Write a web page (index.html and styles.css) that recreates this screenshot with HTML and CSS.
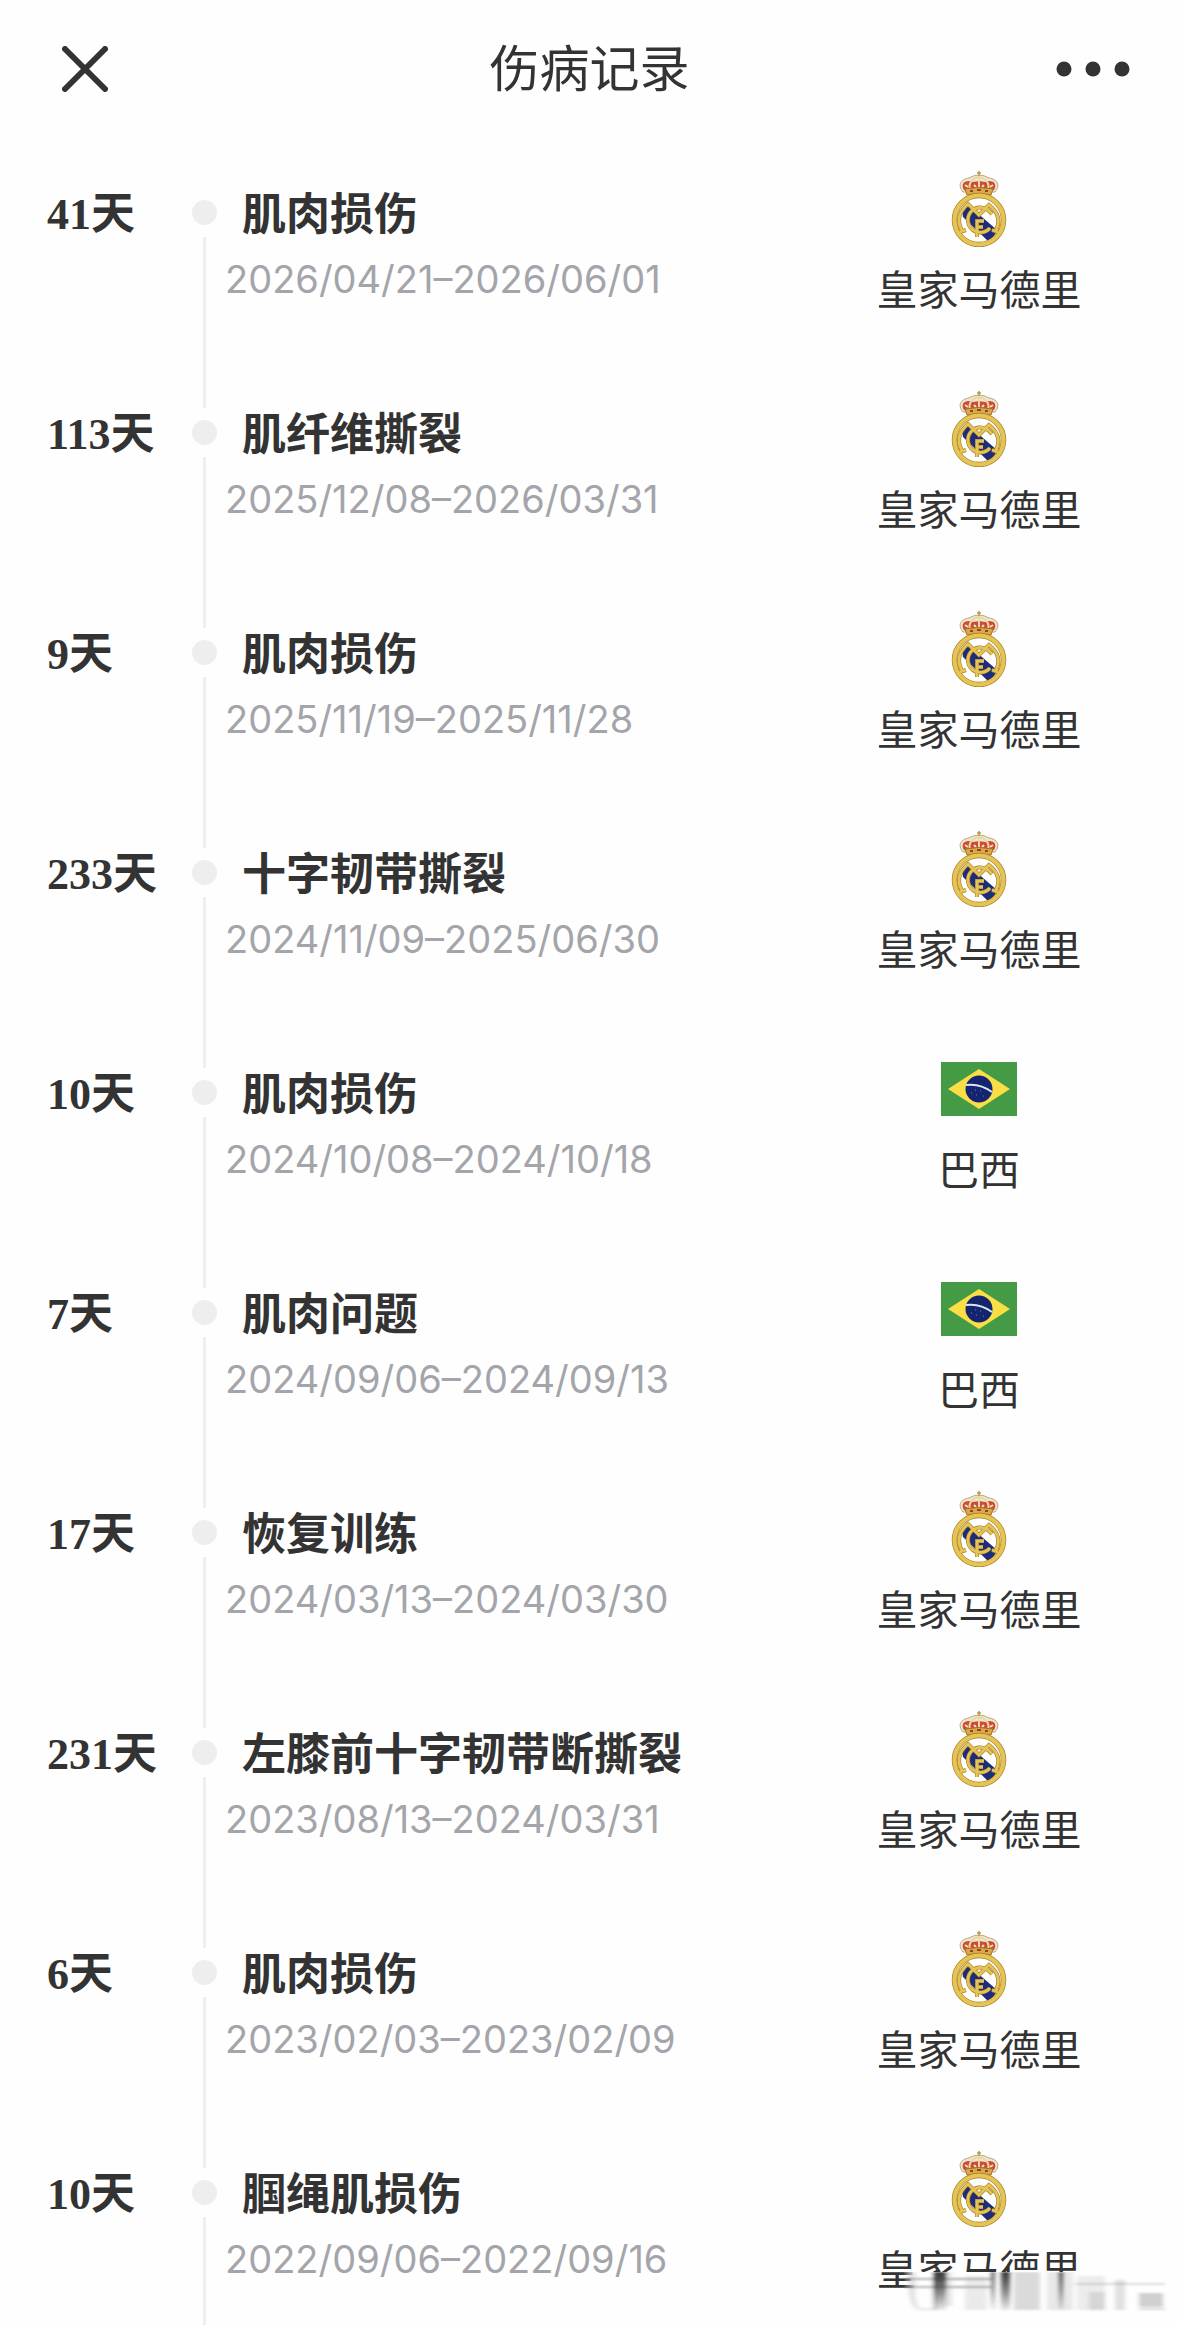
FILE: index.html
```html
<!DOCTYPE html>
<html lang="zh-CN">
<head>
    <meta charset="UTF-8">
    <meta name="viewport" content="width=device-width, initial-scale=1.0">
    <title>伤病记录</title>
    <link rel="stylesheet" href="styles.css">
</head>
<body>
    <!-- shared artwork -->
    <svg class="defs" aria-hidden="true">
        <symbol id="real" viewBox="0 0 76 76">
            <path d="M22 21C16 14 20 8 28 7Q33 4 38 4Q43 4 48 7C56 8 60 14 54 21Z" fill="#eee8d2" stroke="#b9a878" stroke-width="1"/>
            <path d="M23 19C20 14 22 10 28 10L32 11L38 10L44 11L48 10C54 10 56 14 53 19L50 20H26Z" fill="#cf4a36"/>
            <path d="M29 18C27 12 32 7 38 6C44 7 49 12 47 18M38 6V18" fill="none" stroke="#ead9a4" stroke-width="2"/>
            <path d="M24 14L27 16M52 14L49 16M33 14L35 16M43 14L41 16" stroke="#f0dfb4" stroke-width="2"/>
            <path d="M38 0V5M36 2H40" stroke="#b39a52" stroke-width="1.5"/>
            <path d="M24 18Q38 15 52 18L50 24Q38 21 26 24Z" fill="#dda844" stroke="#9c7430" stroke-width="1"/>
            <path d="M29 20H32M36 19H40M44 20H47" stroke="#94402c" stroke-width="2"/>
            <circle cx="38" cy="49" r="24" fill="#fff"/>
            <path d="M21 40L27 34L56 59Q54 66 47 70L22 46Z" fill="#1c2d7c"/>
            <g fill="none" stroke="#a27d35" stroke-width="4">
                <circle cx="38" cy="49" r="24.5" stroke-width="5.5"/>
                <path d="M47 39A12.5 12.5 0 1 0 49 57"/>
                <path d="M22 61Q12 46 27 33L38 44L48 34Q63 46 54 61M19 61L25 59M51 59L57 61M46 38L51 43"/>
                <path d="M36 66V50H43M36 56H42"/>
            </g>
            <g fill="none" stroke="#e6c452" stroke-width="2.8">
                <circle cx="38" cy="49" r="24.5" stroke-width="4.2"/>
                <path d="M47 39A12.5 12.5 0 1 0 49 57"/>
                <path d="M22 61Q12 46 27 33L38 44L48 34Q63 46 54 61M19 61L25 59M51 59L57 61M46 38L51 43"/>
                <path d="M36 66V50H43M36 56H42"/>
            </g>
        </symbol>
        <symbol id="brazil" viewBox="0 0 76 76">
            <rect y="11" width="76" height="54" fill="#459a45"/>
            <path d="M7 38L38 18L69 38L38 58Z" fill="#f9df45"/>
            <circle cx="38" cy="38" r="13.5" fill="#14246f"/>
            <path d="M25 34Q39 32 51 41" fill="none" stroke="#d9e8ee" stroke-width="2"/>
            <path d="M30 42H31M35 44H36M39 40H40M42 45H43M34 39H35" stroke="#6f86b8" stroke-width="1"/>
        </symbol>
    </svg>

    <header class="header">
        <button class="icon-btn close" type="button" aria-label="关闭">
            <svg width="46" height="46" viewBox="0 0 46 46"><path d="M3 3L43 43M43 3L3 43" stroke="#333" stroke-width="6" stroke-linecap="round"/></svg>
        </button>
        <h1 class="title">伤病记录</h1>
        <button class="icon-btn more" type="button" aria-label="更多">
            <svg width="74" height="16" viewBox="0 0 74 16" fill="#333"><circle cx="8" cy="8" r="7.5"/><circle cx="37" cy="8" r="7.5"/><circle cx="66" cy="8" r="7.5"/></svg>
        </button>
    </header>

    <ul class="timeline" id="timeline"></ul>

    <!-- smudged strip in the bottom corner -->
    <svg class="smudge" viewBox="0 0 264 44" aria-hidden="true">
        <defs>
            <linearGradient id="edge">
                <stop offset="0" stop-color="#fefefe" stop-opacity="0"/>
                <stop offset=".05" stop-color="#fefefe"/>
            </linearGradient>
            <linearGradient id="streak" x1="0" y1="0" x2="0" y2="1">
                <stop offset="0" stop-color="#333"/>
                <stop offset=".5" stop-color="#333" stop-opacity=".6"/>
                <stop offset="1" stop-color="#333" stop-opacity=".1"/>
            </linearGradient>
            <filter id="soft"><feGaussianBlur stdDeviation="2 .8"/></filter>
        </defs>
        <rect width="264" height="44" fill="url(#edge)"/>
        <g filter="url(#soft)">
            <path d="M6 0H34V38H16Q8 36 6 22Z" fill="#888" opacity=".25"/>
            <path d="M13 0H29V36H17Q13 32 13 22Z" fill="#fefefe"/>
            <path d="M2 7H88M2 15H88" stroke="#333" stroke-width="2" opacity=".4"/>
            <rect x="30" width="13" height="38" fill="url(#streak)"/>
            <rect x="43" width="6" height="34" fill="#999" opacity=".25"/>
            <rect x="62" y="4" width="22" height="34" fill="#999" opacity=".2"/>
            <rect x="88" width="4" height="38" fill="url(#streak)" opacity=".8"/>
            <rect x="98" width="9" height="38" fill="url(#streak)"/>
            <rect x="111" width="26" height="38" fill="#888" opacity=".3"/>
            <rect x="144" width="26" height="38" fill="#999" opacity=".22"/>
            <rect x="156" width="4" height="38" fill="url(#streak)"/>
            <rect x="174" y="4" width="28" height="34" fill="#999" opacity=".18"/>
            <rect x="186" y="20" width="16" height="18" fill="#888" opacity=".22"/>
            <rect x="212" y="8" width="10" height="30" fill="#888" opacity=".25"/>
            <rect x="236" y="21" width="24" height="14" fill="#777" opacity=".35"/>
            <path d="M172 12H262M236 37H262" stroke="#888" stroke-width="2" opacity=".3"/>
        </g>
    </svg>

    <script>
        const records = [
            [41, '肌肉损伤', '2026/04/21', '2026/06/01', 'real'],
            [113, '肌纤维撕裂', '2025/12/08', '2026/03/31', 'real'],
            [9, '肌肉损伤', '2025/11/19', '2025/11/28', 'real'],
            [233, '十字韧带撕裂', '2024/11/09', '2025/06/30', 'real'],
            [10, '肌肉损伤', '2024/10/08', '2024/10/18', 'brazil'],
            [7, '肌肉问题', '2024/09/06', '2024/09/13', 'brazil'],
            [17, '恢复训练', '2024/03/13', '2024/03/30', 'real'],
            [231, '左膝前十字韧带断撕裂', '2023/08/13', '2024/03/31', 'real'],
            [6, '肌肉损伤', '2023/02/03', '2023/02/09', 'real'],
            [10, '腘绳肌损伤', '2022/09/06', '2022/09/16', 'real']
        ];
        const teams = { real: '皇家马德里', brazil: '巴西' };

        document.getElementById('timeline').innerHTML = records.map(([days, name, from, to, team]) => `
            <li class="record">
                <div class="days">${days}天</div>
                <div class="rail"><span class="dot"></span></div>
                <div class="info">
                    <h2 class="injury">${name}</h2>
                    <p class="dates">${from}–${to}</p>
                </div>
                <div class="team">
                    <svg class="badge" aria-hidden="true"><use href="#${team}"/></svg>
                    <span class="team-name">${teams[team]}</span>
                </div>
            </li>`).join('');
    </script>
</body>
</html>
```
FILE: styles.css
```css
* {
    box-sizing: border-box;
}
body {
    position: relative;
    margin: 0;
    background-color: #fefefe;
    color: #333;
    font-family: Inter, "Noto Sans CJK SC", sans-serif;
}
.defs {
    display: none;
}
.header {
    display: grid;
    grid-template-columns: 1fr auto 1fr;
    align-items: center;
    height: 125px;
    padding: 12px 49px 0;
}
.icon-btn {
    display: flex;
    padding: 0;
    border: 0;
    background: none;
    cursor: pointer;
}
.close {
    justify-self: start;
    padding-left: 13px;
}
.more {
    justify-self: end;
}
.title {
    margin: 0;
    font-size: 50px;
    font-weight: 400;
    line-height: 60px;
}
.timeline {
    margin: 0;
    padding: 0;
    list-style: none;
}
.record {
    display: grid;
    grid-template-columns: 145px 25px 1fr 400px;
    height: 220px;
    padding-left: 47px;
}
.days {
    padding-top: 60px;
    font-family: "Liberation Serif", "Noto Sans CJK SC", serif;
    font-size: 44px;
    font-weight: 700;
    line-height: 60px;
}
.rail {
    display: flex;
    flex-direction: column;
    align-items: center;
}
.rail::before,
.rail::after {
    content: "";
    width: 3px;
    background-color: #efefef;
}
.rail::before {
    height: 63px;
}
.rail::after {
    flex: 1;
}
.record:first-child .rail::before {
    background: none;
}
.dot {
    width: 25px;
    height: 25px;
    margin: 12px 0;
    border-radius: 50%;
    background-color: #eee;
}
.info {
    padding: 59px 0 0 8px;
}
.injury {
    margin: 0;
    padding-left: 17px;
    font-size: 44px;
    font-weight: 700;
    line-height: 60px;
}
.dates {
    margin: 11px 0 0;
    color: #a3a5aa;
    font-size: 38px;
    line-height: 48px;
}
.team {
    display: flex;
    flex-direction: column;
    align-items: center;
    padding-top: 46px;
}
.badge {
    width: 76px;
    height: 76px;
}
.team-name {
    margin-top: 13px;
    font-size: 41px;
    line-height: 60px;
}
.smudge {
    position: absolute;
    right: 12px;
    bottom: 9px;
    width: 264px;
    height: 44px;
}
```
